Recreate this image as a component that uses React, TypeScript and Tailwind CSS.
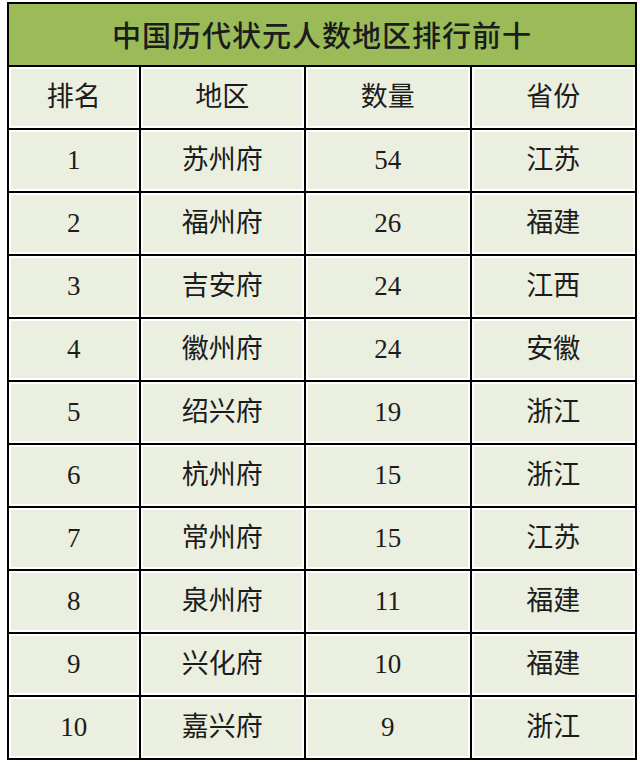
const rows = [
  ['1', '苏州府', '54', '江苏'],
  ['2', '福州府', '26', '福建'],
  ['3', '吉安府', '24', '江西'],
  ['4', '徽州府', '24', '安徽'],
  ['5', '绍兴府', '19', '浙江'],
  ['6', '杭州府', '15', '浙江'],
  ['7', '常州府', '15', '江苏'],
  ['8', '泉州府', '11', '福建'],
  ['9', '兴化府', '10', '福建'],
  ['10', '嘉兴府', '9', '浙江'],
]

const cell =
  'border-2 border-black bg-[#ebefdf] shadow-[inset_0_0_0_2px_#ffffff] text-center align-middle p-0 h-[63px]'

export default function App() {
  return (
    <div className="w-[640px] h-[766px] bg-white pt-[2px] pl-[7px]">
      <table
        className="border-collapse w-[630px] text-[#1c1c1c]"
        style={{ fontFamily: '"Liberation Serif", "Noto Sans CJK SC", serif' }}
      >
        <colgroup>
          <col className="w-[132px]" />
          <col className="w-[166px]" />
          <col className="w-[166px]" />
          <col className="w-[166px]" />
        </colgroup>
        <thead>
          <tr>
            <th
              colSpan={4}
              className="border-2 border-black bg-[#9bbb59] h-[63px] text-center text-[29px] font-medium tracking-[1px] [font-family:'Noto_Sans_CJK_SC',sans-serif]"
            >
              中国历代状元人数地区排行前十
            </th>
          </tr>
          <tr className="text-[27px]">
            {['排名', '地区', '数量', '省份'].map((h) => (
              <th key={h} className={`${cell} font-normal`}>
                {h}
              </th>
            ))}
          </tr>
        </thead>
        <tbody className="text-[27px]">
          {rows.map((r) => (
            <tr key={r[0]}>
              {r.map((v, i) => (
                <td key={i} className={cell}>
                  {v}
                </td>
              ))}
            </tr>
          ))}
        </tbody>
      </table>
    </div>
  )
}
